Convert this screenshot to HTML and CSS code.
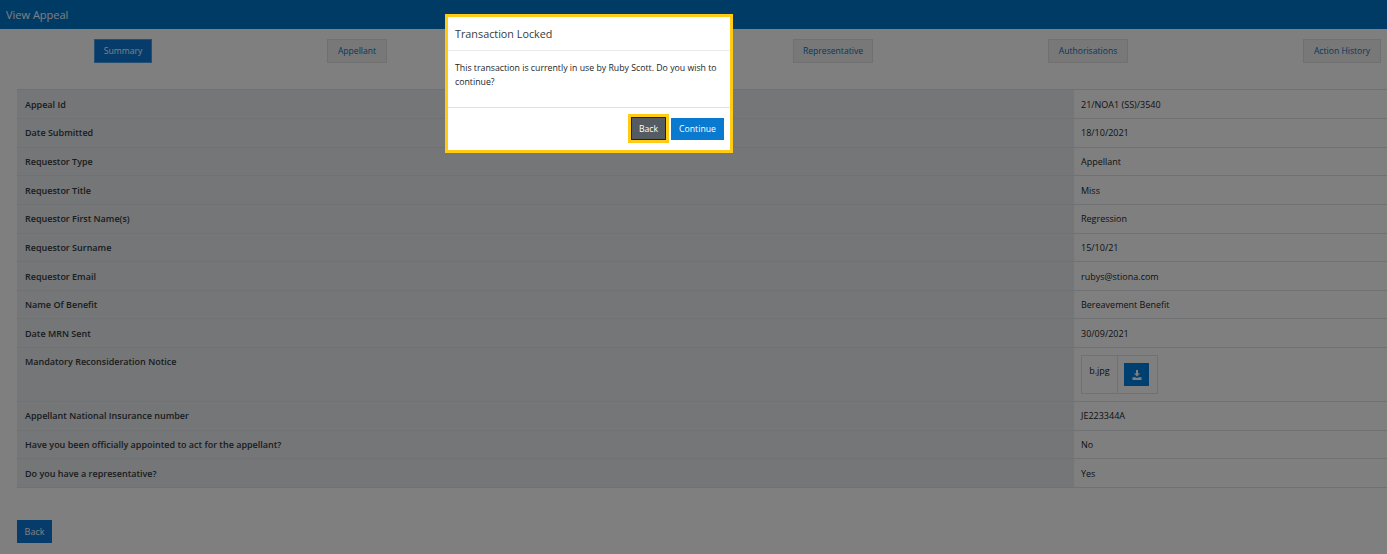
FILE: index.html
```html
<!DOCTYPE html>
<html lang="en">
<head>
  <meta charset="UTF-8">
  <meta name="viewport" content="width=device-width, initial-scale=1.0">
  <title>View Appeal</title>
  <link rel="stylesheet" href="styles.css">
</head>
<body>
  <div class="header">View Appeal</div>

  <div class="tabs">
    <a class="tab active">Summary</a>
    <a class="tab">Appellant</a>
    <a class="tab">Appeal</a>
    <a class="tab">Representative</a>
    <a class="tab">Authorisations</a>
    <a class="tab">Action History</a>
  </div>

  <div class="details">
    <div class="row"><div class="label">Appeal Id</div><div class="value">21/NOA1 (SS)/3540</div></div>
    <div class="row"><div class="label">Date Submitted</div><div class="value">18/10/2021</div></div>
    <div class="row"><div class="label">Requestor Type</div><div class="value">Appellant</div></div>
    <div class="row"><div class="label">Requestor Title</div><div class="value">Miss</div></div>
    <div class="row"><div class="label">Requestor First Name(s)</div><div class="value">Regression</div></div>
    <div class="row"><div class="label">Requestor Surname</div><div class="value">15/10/21</div></div>
    <div class="row"><div class="label">Requestor Email</div><div class="value">rubys@stiona.com</div></div>
    <div class="row"><div class="label">Name Of Benefit</div><div class="value">Bereavement Benefit</div></div>
    <div class="row"><div class="label">Date MRN Sent</div><div class="value">30/09/2021</div></div>
    <div class="row">
      <div class="label">Mandatory Reconsideration Notice</div>
      <div class="value file-value">
        <div class="file">
          <div class="file-name">b.jpg</div>
          <div class="file-action">
            <span class="download">
              <svg width="10" height="10" viewBox="0 0 10 10"><path fill="currentColor" d="M4 0h2v3.5h2L5 6.6 2 3.5h2zM.5 7.2h2.6L5 8l1.9-.8h2.6V10h-9z"/></svg>
            </span>
          </div>
        </div>
      </div>
    </div>
    <div class="row"><div class="label">Appellant National Insurance number</div><div class="value">JE223344A</div></div>
    <div class="row"><div class="label">Have you been officially appointed to act for the appellant?</div><div class="value">No</div></div>
    <div class="row"><div class="label">Do you have a representative?</div><div class="value">Yes</div></div>
  </div>

  <a class="back-link">Back</a>

  <div class="overlay"></div>

  <div class="modal">
    <div class="modal-title">Transaction Locked</div>
    <div class="modal-body">This transaction is currently in use by Ruby Scott. Do you wish to continue?</div>
    <div class="modal-footer">
      <button class="btn btn-back">Back</button>
      <button class="btn btn-continue">Continue</button>
    </div>
  </div>
</body>
</html>
```

FILE: styles.css
```css
html, body {
  height: 100%;
}
body {
  margin: 0;
  font-family: "Open Sans", sans-serif;
  font-size: 9px;
  color: #212529;
  background: #fff;
  overflow: hidden;
}
.header {
  height: 29px;
  line-height: 29px;
  padding-left: 6px;
  font-size: 11px;
  color: #fff;
  background: #0076cc;
}
.tabs {
  display: flex;
  justify-content: flex-end;
  gap: 175px;
  padding: 10px 6px 0 0;
  height: 51px;
  box-sizing: border-box;
  font-size: 8.6px;
}
.tab {
  display: flex;
  align-items: center;
  justify-content: center;
  width: 80px;
  height: 24px;
  color: #0a6ebd;
  background: #f1f1f1;
  border: 1px solid #e0e0e0;
  box-sizing: border-box;
}
.tab:nth-child(2) {
  width: 60px;
}
.tab:nth-child(3) {
  width: 56px;
}
.tab:nth-child(6) {
  width: 78px;
}
.tab.active {
  width: 58px;
  color: #fff;
  background: #0a78d8;
  border-color: #4a9ee0;
}
.details {
  margin: 9.3px 0 0 17px;
}
.row {
  display: flex;
  border-bottom: 1px solid #dee2e6;
  line-height: 14px;
}
.row:first-child {
  border-top: 1px solid #dee2e6;
}
.label {
  flex: 0 0 1057px;
  box-sizing: border-box;
  padding: 7.4px 8px 6.26px;
  font-weight: 600;
  color: #343a40;
  background: #e9ecef;
}
.value {
  flex: 1;
  padding: 7.4px 7px 6.26px;
}
.file-value {
  padding: 7px 7px 6.96px;
}
.file {
  display: flex;
  width: fit-content;
  height: 39px;
  border: 1px solid #dee2e6;
  box-sizing: border-box;
}
.file-name {
  width: 36px;
  padding-top: 8px;
  text-align: center;
  border-right: 1px solid #dee2e6;
  box-sizing: border-box;
}
.file-action {
  width: 39px;
  padding: 7px 0 0 6px;
  box-sizing: border-box;
}
.download {
  display: flex;
  align-items: center;
  justify-content: center;
  width: 25px;
  height: 23px;
  color: #fff;
  background: #0080e0;
}
.back-link {
  display: flex;
  align-items: center;
  justify-content: center;
  width: 35px;
  height: 23px;
  margin: 31.8px 0 0 17px;
  color: #fff;
  background: #0a78d8;
}
.overlay {
  position: fixed;
  top: 0;
  right: 0;
  bottom: 0;
  left: 0;
  background: rgba(0, 0, 0, 0.5);
}
.modal {
  position: fixed;
  top: 14px;
  left: 445px;
  width: 288px;
  height: 139px;
  display: flex;
  flex-direction: column;
  box-sizing: border-box;
  border: 3px solid #ffcb14;
  background: #fff;
}
.modal-title {
  height: 34px;
  padding-left: 7px;
  line-height: 33px;
  font-size: 10.8px;
  color: #343a40;
  border-bottom: 1px solid #e9ecef;
  box-sizing: border-box;
}
.modal-body {
  height: 57px;
  padding: 10px 7px 0;
  font-size: 8.75px;
  line-height: 14px;
  border-bottom: 1px solid #dee2e6;
  box-sizing: border-box;
}
.modal-footer {
  display: flex;
  justify-content: flex-end;
  align-items: center;
  gap: 5px;
  flex: 1;
  padding: 0 6px 1px 0;
}
.btn {
  border: 0;
  padding: 0;
  font-family: inherit;
  font-size: 8.7px;
  color: #fff;
}
.btn-back {
  width: 35px;
  height: 23px;
  background: #545b62;
  border: 1px solid #222;
  outline: 3px solid #ffcb14;
}
.btn-continue {
  width: 53px;
  height: 22px;
  background: #0a7ad0;
}
```
